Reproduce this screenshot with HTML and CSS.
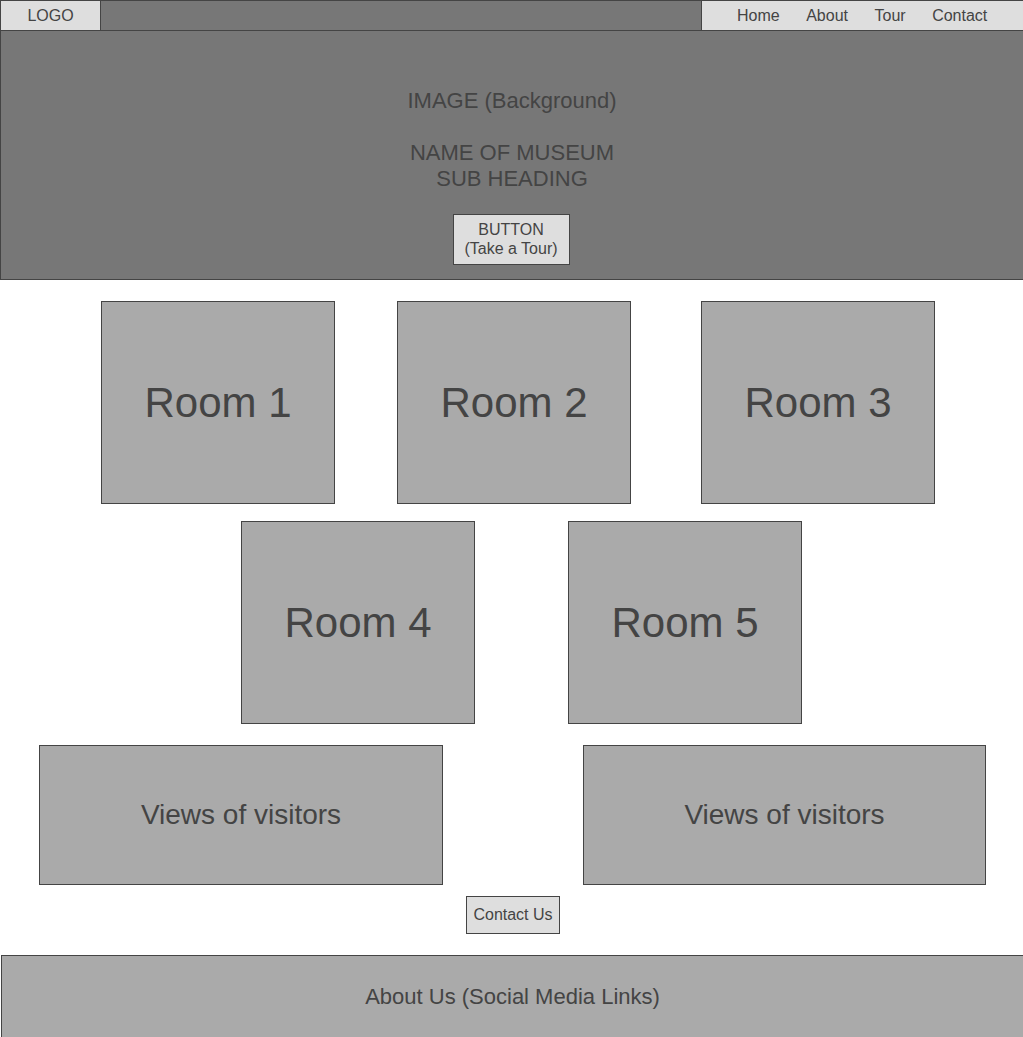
FILE: index.html
```html
<!DOCTYPE html>
<html lang="en">
<head>
  <meta charset="UTF-8" />
  <meta name="viewport" content="width=device-width, initial-scale=1.0" />
  <title>Museum Wireframe</title>
  <link rel="stylesheet" href="styles.css">
</head>
<body>
  <!-- Top bar -->
  <header class="topbar">
    <div class="logo">LOGO</div>
    <div class="topbar-fill"></div>
    <nav class="nav">
      <a href="#">Home</a>
      <a href="#">About</a>
      <a href="#">Tour</a>
      <a href="#">Contact</a>
    </nav>
  </header>

  <!-- Hero -->
  <section class="hero">
    <p class="hero-image">IMAGE (Background)</p>
    <h1 class="hero-title">NAME OF MUSEUM<br>SUB HEADING</h1>
    <button type="button" class="btn btn-tour">BUTTON<br>(Take a Tour)</button>
  </section>

  <!-- Rooms -->
  <section class="rooms">
    <div class="row row-top">
      <div class="room">Room 1</div>
      <div class="room">Room 2</div>
      <div class="room room-3">Room 3</div>
    </div>
    <div class="row row-bottom">
      <div class="room">Room 4</div>
      <div class="room">Room 5</div>
    </div>
  </section>

  <!-- Visitors -->
  <section class="row views">
    <div class="view">Views of visitors</div>
    <div class="view view-right">Views of visitors</div>
  </section>

  <div class="contact">
    <button type="button" class="btn btn-contact">Contact Us</button>
  </div>

  <footer class="footer">About Us (Social Media Links)</footer>
</body>
</html>
```

FILE: styles.css
```css
* {
  box-sizing: border-box;
}

body {
  margin: 0;
  font-family: "Liberation Sans", Arial, sans-serif;
  color: #444;
  background: #fff;
  overflow: hidden;
}

.topbar {
  display: flex;
  height: 31px;
  background: #777;
  border: 1px solid #444;
  border-right: none;
}

.logo {
  width: 100px;
  background: #dedede;
  border-right: 1px solid #444;
  text-align: center;
  font-size: 16px;
  line-height: 29px;
}

.topbar-fill {
  flex: 1;
}

.nav {
  width: 322px;
  display: flex;
  gap: 26.5px;
  padding-left: 35px;
  background: #dedede;
  border-left: 1px solid #444;
}

.nav a {
  color: #444;
  text-decoration: none;
  font-size: 16px;
  line-height: 29px;
}

.hero {
  height: 249px;
  background: #777;
  border: 1px solid #444;
  border-top: none;
  border-right: none;
  text-align: center;
  padding-top: 57px;
}

.hero-image,
.hero-title {
  margin: 0;
  font-size: 22px;
  font-weight: normal;
  line-height: 26px;
}

.hero-title {
  margin-top: 26px;
}

.btn {
  font-family: inherit;
  color: #444;
  background: #dedede;
  border: 1px solid #444;
  border-radius: 0;
  font-size: 16px;
  cursor: pointer;
}

.btn-tour {
  margin-top: 22px;
  margin-right: 2px;
  width: 117px;
  height: 51px;
  padding: 0 0 2px;
  line-height: 19px;
}

.rooms {
  padding-top: 21px;
}

.row {
  display: flex;
}

.row-top {
  padding-left: 101px;
  gap: 62px;
}

.room-3 {
  margin-left: 8px;
}

.row-bottom {
  padding-left: 241px;
  gap: 93px;
  margin-top: 17px;
}

.room {
  width: 234px;
  height: 203px;
  background: #aaa;
  border: 1px solid #444;
  display: flex;
  align-items: center;
  justify-content: center;
  font-size: 42px;
}

.views {
  margin-top: 21px;
  padding-left: 39px;
  gap: 140px;
}

.view {
  width: 404px;
  height: 140px;
  background: #aaa;
  border: 1px solid #444;
  display: flex;
  align-items: center;
  justify-content: center;
  font-size: 28px;
}

.view-right {
  width: 403px;
}

.contact {
  display: flex;
  justify-content: center;
  padding-left: 3px;
  margin-top: 11px;
}

.btn-contact {
  width: 94px;
  height: 38px;
  padding: 0;
}

.footer {
  margin: 21px 0 0 1px;
  height: 100px;
  background: #aaa;
  border-top: 1px solid #444;
  border-left: 1px solid #444;
  text-align: center;
  font-size: 22px;
  padding-top: 28px;
}
```
